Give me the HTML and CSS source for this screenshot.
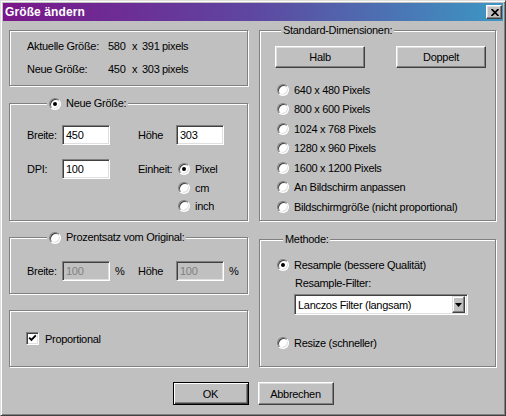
FILE: index.html
```html
<!DOCTYPE html>
<html lang="de">
<head>
<meta charset="utf-8">
<title>Größe ändern</title>
<link rel="stylesheet" href="styles.css">
</head>
<body>
<div class="window">
  <div class="titlebar">
    <span class="title">Größe ändern</span>
    <div class="close"><svg width="8" height="7" viewBox="0 0 8 7"><path d="M0.5 0 L7.5 7 M7.5 0 L0.5 7" stroke="#000" stroke-width="1.7" fill="none"/></svg></div>
  </div>
  <div class="body">
    <div class="columns">
      <div class="col">
        <div class="group g-info">
          <div class="info-row"><span class="info-label">Aktuelle Größe:</span><span class="n1">580</span><span class="nx">x</span><span class="n2">391</span><span>pixels</span></div>
          <div class="info-row second"><span class="info-label">Neue Größe:</span><span class="n1">450</span><span class="nx">x</span><span class="n2">303</span><span>pixels</span></div>
        </div>

        <div class="group g-new">
          <div class="legend legend-radio"><span class="radio checked"></span>Neue Größe:</div>
          <div class="frow first">
            <span class="flabel">Breite:</span><input class="field" value="450">
            <span class="fgap"></span>
            <span class="flabel wide">Höhe</span><input class="field" value="303">
          </div>
          <div class="frow second top">
            <span class="flabel tall">DPI:</span><input class="field" value="100">
            <span class="fgap"></span>
            <span class="flabel wide tall">Einheit:</span>
            <div class="units">
              <div class="unit u-first"><span class="radio checked"></span>Pixel</div>
              <div class="unit"><span class="radio"></span>cm</div>
              <div class="unit"><span class="radio"></span>inch</div>
            </div>
          </div>
        </div>

        <div class="group g-pct">
          <div class="legend legend-radio"><span class="radio"></span>Prozentsatz vom Original:</div>
          <div class="frow pct-row">
            <span class="flabel">Breite:</span><input class="field disabled" value="100" disabled>
            <span class="pct">%</span>
            <span class="flabel wide">Höhe</span><input class="field disabled" value="100" disabled>
            <span class="pct">%</span>
          </div>
        </div>

        <div class="group g-prop">
          <div class="check-row"><span class="checkbox"><svg width="9" height="9" viewBox="0 0 9 9"><path d="M1.2 3.6 L3.4 5.8 L7.8 1.4" stroke="#000" stroke-width="1.9" fill="none"/></svg></span>Proportional</div>
        </div>
      </div>

      <div class="col">
        <div class="group g-std">
          <div class="legend">Standard-Dimensionen:</div>
          <div class="std-buttons">
            <div class="btn std-btn">Halb</div>
            <div class="btn std-btn">Doppelt</div>
          </div>
          <div class="std-list">
            <div class="ropt"><span class="radio"></span>640 x 480 Pixels</div>
            <div class="ropt"><span class="radio"></span>800 x 600 Pixels</div>
            <div class="ropt"><span class="radio"></span>1024 x 768 Pixels</div>
            <div class="ropt"><span class="radio"></span>1280 x 960 Pixels</div>
            <div class="ropt"><span class="radio"></span>1600 x 1200 Pixels</div>
            <div class="ropt"><span class="radio"></span>An Bildschirm anpassen</div>
            <div class="ropt"><span class="radio"></span>Bildschirmgröße (nicht proportional)</div>
          </div>
        </div>

        <div class="group g-meth">
          <div class="legend">Methode:</div>
          <div class="mopt m-first"><span class="radio checked"></span>Resample (bessere Qualität)</div>
          <div class="filter-label">Resample-Filter:</div>
          <div class="select">
            <span class="select-text">Lanczos Filter (langsam)</span>
            <span class="select-btn"><svg width="7" height="4" viewBox="0 0 7 4"><path d="M0 0 H7 L3.5 4 Z" fill="#000"/></svg></span>
          </div>
          <div class="mopt m-second"><span class="radio"></span>Resize (schneller)</div>
        </div>
      </div>
    </div>

    <div class="buttons">
      <div class="btn dlg-btn default">OK</div>
      <div class="btn dlg-btn">Abbrechen</div>
    </div>
  </div>
</div>
</body>
</html>
```

FILE: styles.css
```css
* { box-sizing: border-box; }

body {
  margin: 0;
  background: #c0c0c0;
  font-family: "Liberation Sans", Arial, sans-serif;
  font-size: 11px;
  letter-spacing: -0.3px;
  color: #000;
}

.window {
  width: 506px;
  height: 416px;
  border: 1px solid;
  border-color: #dfdfdf #404040 #404040 #dfdfdf;
  box-shadow: inset 1px 1px #fff, inset -1px -1px #808080;
  padding: 2px;
  background: #c0c0c0;
  display: flex;
  flex-direction: column;
}

.titlebar {
  height: 18px;
  flex: none;
  background: linear-gradient(90deg, #7a168a 0%, #5e47a0 50%, #3c97c4 100%);
  display: flex;
  align-items: center;
  justify-content: space-between;
  padding: 0 1px 0 2px;
  color: #fff;
}

.title {
  font-weight: bold;
  font-size: 12px;
  letter-spacing: 0.1px;
  line-height: 14px;
}

.close {
  width: 16px;
  height: 14px;
  background: #c0c0c0;
  border: 1px solid;
  border-color: #fff #404040 #404040 #fff;
  box-shadow: inset -1px -1px #808080, inset 1px 1px #dfdfdf;
  display: flex;
  align-items: center;
  justify-content: center;
  padding-left: 1px;
}
.close svg { display: block; }

.body {
  flex: 1;
  padding: 9px 6px 0 6px;
  display: flex;
  flex-direction: column;
}

.columns {
  display: grid;
  grid-template-columns: 239px 237px;
  column-gap: 11px;
  align-items: start;
}

.col {
  display: flex;
  flex-direction: column;
}

.group {
  border: 1px solid #808080;
  box-shadow: inset 1px 1px #fff, 1px 1px #fff;
  display: flex;
  flex-direction: column;
}

.legend {
  align-self: flex-start;
  margin: -7px 0 0 6px;
  padding: 0 2px;
  height: 13px;
  line-height: 13px;
  background: #c0c0c0;
  display: flex;
  align-items: center;
  white-space: nowrap;
}
.legend-radio {
  margin-left: 20px;
  padding: 0 2px 0 2px;
}
.legend-radio .radio { margin-right: 5px; }

/* radios / checkbox */
.radio {
  width: 12px;
  height: 12px;
  flex: none;
  border-radius: 50%;
  background: #fff;
  border: 1px solid;
  border-color: #808080 #fff #fff #808080;
  box-shadow: inset 1px 1px #404040, inset -1px -1px #dfdfdf;
  position: relative;
}
.radio.checked::after {
  content: "";
  position: absolute;
  left: 3px;
  top: 3px;
  width: 4px;
  height: 4px;
  border-radius: 50%;
  background: #000;
}

.checkbox {
  width: 13px;
  height: 13px;
  flex: none;
  background: #fff;
  border: 1px solid;
  border-color: #808080 #fff #fff #808080;
  box-shadow: inset 1px 1px #404040, inset -1px -1px #dfdfdf;
  display: flex;
  align-items: center;
  justify-content: center;
  margin-right: 6px;
}
.checkbox svg { display: block; }

/* fields */
.field {
  width: 48px;
  height: 20px;
  flex: none;
  margin: 0;
  border: 1px solid;
  border-color: #808080 #fff #fff #808080;
  box-shadow: inset 1px 1px #404040, inset -1px -1px #dfdfdf;
  background: #fff;
  padding: 0 3px;
  font: inherit;
  letter-spacing: inherit;
  color: #000;
  outline: none;
  border-radius: 0;
}
.field.disabled {
  background: #c0c0c0;
  color: #808080;
}

.btn {
  background: #c0c0c0;
  border: 1px solid;
  border-color: #fff #404040 #404040 #fff;
  box-shadow: inset -1px -1px #808080, inset 1px 1px #dfdfdf;
  display: flex;
  align-items: center;
  justify-content: center;
}

/* group 1 */
.g-info {
  height: 56px;
  padding: 9px 0 0 17px;
}
.info-row {
  display: flex;
  line-height: 13px;
  height: 13px;
  white-space: nowrap;
}
.info-row.second { margin-top: 10px; }
.info-label { width: 81px; flex: none; }
.n1 { width: 24px; flex: none; }
.nx { width: 10px; flex: none; }
.n2 { width: 20px; flex: none; }

/* group 2 */
.g-new {
  margin-top: 17px;
  height: 118px;
  padding-left: 17px;
}
.frow {
  display: flex;
  align-items: center;
  height: 20px;
}
.frow.first { margin-top: 15px; }
.frow.second { margin-top: 14px; align-items: flex-start; height: auto; }
.flabel { width: 35px; flex: none; white-space: nowrap; }
.flabel.wide { width: 38px; }
.flabel.tall { line-height: 20px; }
.fgap { width: 28px; flex: none; }

.units {
  display: flex;
  flex-direction: column;
  padding-left: 2px;
}
.unit {
  display: flex;
  align-items: center;
  height: 18px;
  gap: 5px;
}
.unit.u-first { height: 20px; }

/* group 3 */
.g-pct {
  margin-top: 16px;
  height: 57px;
  padding-left: 17px;
}
.pct-row { margin-top: 17px; }
.pct {
  width: 28px;
  flex: none;
  padding-left: 5px;
}

/* group 4 */
.g-prop {
  margin-top: 16px;
  height: 57px;
  padding-left: 16px;
  justify-content: center;
}
.check-row {
  display: flex;
  align-items: center;
}

/* right column */
.g-std {
  height: 191px;
  padding-left: 15px;
}
.std-buttons {
  display: flex;
  gap: 31px;
  margin-top: 9px;
}
.std-btn {
  width: 90px;
  height: 22px;
}
.std-list {
  margin-top: 12px;
  padding-left: 2px;
  display: flex;
  flex-direction: column;
}
.ropt {
  height: 19.5px;
  display: flex;
  align-items: center;
  gap: 5px;
  white-space: nowrap;
}

.g-meth {
  margin-top: 18px;
  height: 128px;
  padding-left: 17px;
}
.mopt {
  display: flex;
  align-items: center;
  gap: 5px;
  height: 16px;
}
.m-first { margin-top: 11px; }
.m-second { margin-top: 20px; }
.filter-label {
  margin: 4px 0 0 18px;
  line-height: 13px;
}
.select {
  margin: 4px 0 0 17px;
  width: 174px;
  height: 21px;
  border: 1px solid;
  border-color: #808080 #fff #fff #808080;
  box-shadow: inset 1px 1px #404040, inset -1px -1px #dfdfdf;
  background: #fff;
  display: flex;
  align-items: center;
  justify-content: space-between;
  padding: 2px;
}
.select-text { padding-left: 1px; }
.select-btn {
  width: 13px;
  height: 17px;
  background: #c0c0c0;
  border: 1px solid;
  border-color: #dfdfdf #404040 #404040 #dfdfdf;
  box-shadow: inset -1px -1px #808080, inset 1px 1px #fff;
  display: flex;
  align-items: center;
  justify-content: center;
}
.select-btn svg { display: block; }

/* bottom buttons */
.buttons {
  display: flex;
  justify-content: center;
  gap: 9px;
  margin-top: 15px;
}
.dlg-btn {
  width: 76px;
  height: 23px;
}
.dlg-btn.default {
  border: 1px solid #000;
  box-shadow: inset 1px 1px #fff, inset -1px -1px #404040, inset -2px -2px #808080;
}
```
